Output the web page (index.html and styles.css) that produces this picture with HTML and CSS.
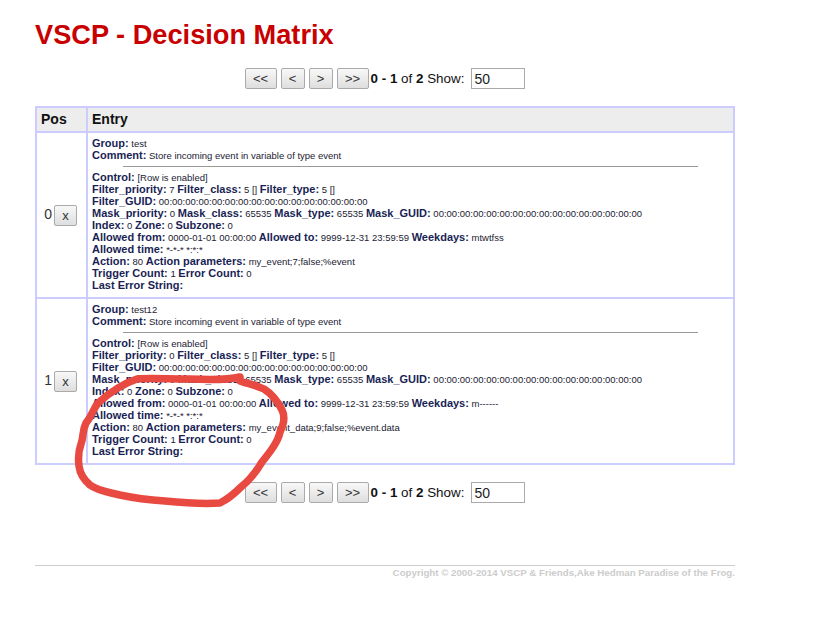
FILE: index.html
```html
<!DOCTYPE html>
<html lang="en">
<head>
<meta charset="utf-8">
<title>VSCP - Decision Matrix</title>
<link rel="stylesheet" href="styles.css">
</head>
<body>
<main class="page">
  <h1 class="title">VSCP - Decision Matrix</h1>
  <form class="pager pager-top">
    <button type="button" class="btn btn-wide">&lt;&lt;</button>
    <button type="button" class="btn btn-narrow">&lt;</button>
    <button type="button" class="btn btn-narrow">&gt;</button>
    <button type="button" class="btn btn-wide">&gt;&gt;</button>
    <span class="pager-text"><b>0 - 1</b> of <b>2</b> Show:</span>
    <input class="show" type="text" value="50">
  </form>
  <table class="matrix">
    <thead>
      <tr><th class="col-pos">Pos</th><th>Entry</th></tr>
    </thead>
    <tbody>
      <tr>
        <td class="pos">0<button type="button" class="btn btn-x">x</button></td>
        <td class="entry">
          <b>Group:</b> test<br>
          <b>Comment:</b> Store incoming event in variable of type event
          <hr class="rule">
          <b>Control:</b> [Row is enabled]<br>
          <b>Filter_priority:</b> 7 <b>Filter_class:</b> 5 [] <b>Filter_type:</b> 5 []<br>
          <b>Filter_GUID:</b> 00:00:00:00:00:00:00:00:00:00:00:00:00:00:00:00<br>
          <b>Mask_priority:</b> 0 <b>Mask_class:</b> 65535 <b>Mask_type:</b> 65535 <b>Mask_GUID:</b> 00:00:00:00:00:00:00:00:00:00:00:00:00:00:00:00<br>
          <b>Index:</b> 0 <b>Zone:</b> 0 <b>Subzone:</b> 0<br>
          <b>Allowed from:</b> 0000-01-01 00:00:00 <b>Allowed to:</b> 9999-12-31 23:59:59 <b>Weekdays:</b> mtwtfss<br>
          <b>Allowed time:</b> *-*-* *:*:*<br>
          <b>Action:</b> 80 <b>Action parameters:</b> my_event;7;false;%event<br>
          <b>Trigger Count:</b> 1 <b>Error Count:</b> 0<br>
          <b>Last Error String:</b>
        </td>
      </tr>
      <tr>
        <td class="pos">1<button type="button" class="btn btn-x">x</button></td>
        <td class="entry">
          <b>Group:</b> test12<br>
          <b>Comment:</b> Store incoming event in variable of type event
          <hr class="rule">
          <b>Control:</b> [Row is enabled]<br>
          <b>Filter_priority:</b> 0 <b>Filter_class:</b> 5 [] <b>Filter_type:</b> 5 []<br>
          <b>Filter_GUID:</b> 00:00:00:00:00:00:00:00:00:00:00:00:00:00:00:00<br>
          <b>Mask_priority:</b> 0 <b>Mask_class:</b> 65535 <b>Mask_type:</b> 65535 <b>Mask_GUID:</b> 00:00:00:00:00:00:00:00:00:00:00:00:00:00:00:00<br>
          <b>Index:</b> 0 <b>Zone:</b> 0 <b>Subzone:</b> 0<br>
          <b>Allowed from:</b> 0000-01-01 00:00:00 <b>Allowed to:</b> 9999-12-31 23:59:59 <b>Weekdays:</b> m------<br>
          <b>Allowed time:</b> *-*-* *:*:*<br>
          <b>Action:</b> 80 <b>Action parameters:</b> my_event_data;9;false;%event.data<br>
          <b>Trigger Count:</b> 1 <b>Error Count:</b> 0<br>
          <b>Last Error String:</b>
        </td>
      </tr>
    </tbody>
  </table>
  <form class="pager pager-bottom">
    <button type="button" class="btn btn-wide">&lt;&lt;</button>
    <button type="button" class="btn btn-narrow">&lt;</button>
    <button type="button" class="btn btn-narrow">&gt;</button>
    <button type="button" class="btn btn-wide">&gt;&gt;</button>
    <span class="pager-text"><b>0 - 1</b> of <b>2</b> Show:</span>
    <input class="show" type="text" value="50">
  </form>
  <footer class="footer">Copyright © 2000-2014 VSCP &amp; Friends,Ake Hedman Paradise of the Frog.</footer>
</main>
<svg class="scribble" width="826" height="640" viewBox="0 0 826 640" aria-hidden="true">
  <path d="M240 377 C232 379 214 380 190 379 C168 379 148 378 137 379 C122 384 108 394 98 403 C92 411 92 416 86 423 C82 431 84 436 81 444 C78 452 78 458 79 466 C80 474 84 480 90 485 C98 491 108 492 120 495 C134 498 150 500 165 501 C185 503 205 504 220 503 C230 498 236 492 241 487 C250 480 256 472 262 462 C270 452 278 442 280 432 C284 424 285 416 282 410 C278 402 272 394 264 389 C256 385 248 384 240 381"/>
</svg>
</body>
</html>
```

FILE: styles.css
```css
html, body {
  margin: 0;
  padding: 0;
  background: #fff;
}

body {
  font-family: "Liberation Sans", Arial, sans-serif;
  color: #111;
}

.page {
  width: 700px;
  margin-left: 35px;
}

.title {
  margin: 0;
  padding-top: 19px;
  font-size: 27.2px;
  line-height: 32px;
  font-weight: bold;
  color: #c80000;
}

.pager {
  display: flex;
  justify-content: center;
  align-items: center;
  height: 21px;
  font-size: 13.4px;
}

.pager-top {
  margin-top: 17px;
}

.pager-bottom {
  margin-top: 17px;
}

.btn {
  box-sizing: border-box;
  height: 21px;
  margin: 0 4px 0 0;
  padding: 0;
  border: 1px solid #aaa;
  border-radius: 2px;
  background: linear-gradient(#f8f8f8, #dedede);
  font-family: "Liberation Sans", Arial, sans-serif;
  font-size: 13px;
  color: #333;
}

.btn-wide {
  width: 32px;
}

.btn-narrow {
  width: 24px;
}

.btn-wide:nth-of-type(4) {
  margin-right: 2px;
}

.pager-text {
  margin-right: 7px;
}

.show {
  box-sizing: border-box;
  width: 54px;
  height: 21px;
  margin: 0;
  padding: 0 2px;
  border: 1px solid #aaa;
  font-family: "Liberation Sans", Arial, sans-serif;
  font-size: 14px;
  color: #222;
}

.matrix {
  width: 700px;
  margin-top: 17px;
  border-collapse: collapse;
  table-layout: fixed;
}

.matrix th,
.matrix td {
  border: 2px solid #ccf;
}

.matrix th {
  height: 21px;
  padding: 0 0 2px 4px;
  background: #ededed;
  font-size: 14px;
  text-align: left;
  color: #111;
}

.col-pos {
  width: 45px;
}

.pos {
  padding: 0;
  font-size: 14px;
  text-align: right;
  color: #333;
}

.btn-x {
  width: 23px;
  margin: 0 9px 0 2px;
  vertical-align: middle;
}

.entry {
  padding: 5px 4px 5px 4px;
  font-size: 9.5px;
  line-height: 12px;
  color: #223;
}

.entry b {
  font-size: 11px;
  line-height: 0;
  color: #1a1f55;
}

.rule {
  width: 575px;
  height: 1px;
  margin: 4px auto 5px;
  border: 0;
  background: #999;
}

.footer {
  margin-top: 62px;
  padding-top: 1px;
  border-top: 1px solid #ccc;
  font-size: 9.73px;
  line-height: 12px;
  font-weight: bold;
  text-align: right;
  color: #ccc;
}

.scribble {
  position: absolute;
  top: 0;
  left: 0;
  pointer-events: none;
}

.scribble path {
  fill: none;
  stroke: #e84a42;
  stroke-width: 7.5;
  stroke-linecap: round;
  stroke-linejoin: round;
}
```
